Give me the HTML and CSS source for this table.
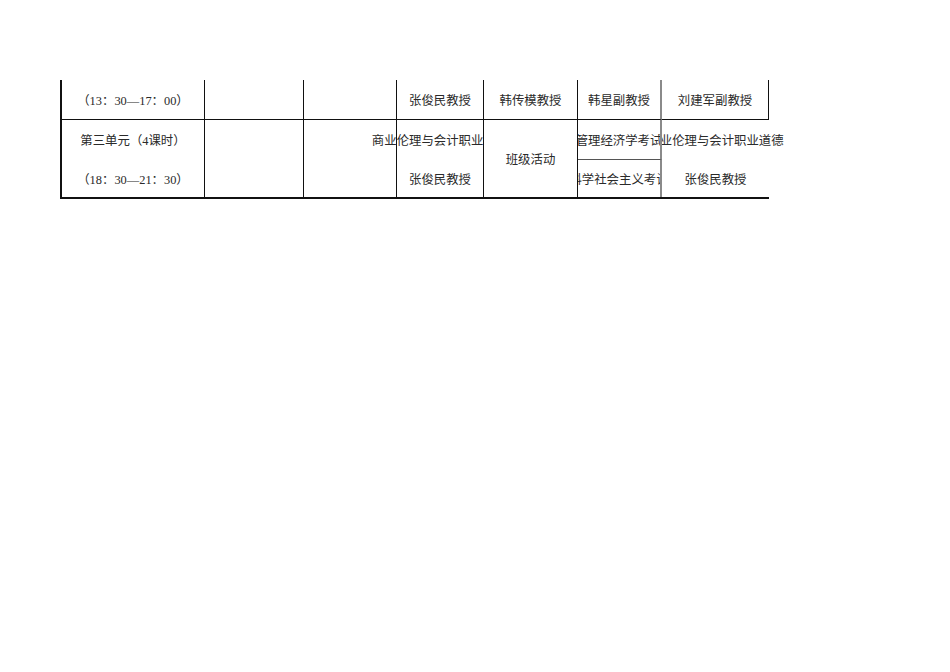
FILE: index.html
```html
<!DOCTYPE html>
<html lang="zh">
<head>
<meta charset="utf-8">
<link rel="stylesheet" href="styles.css">
</head>
<body>
<div class="sheet">
  <div class="grid">
    <div class="cell r1">（13：30—17：00）</div>
    <div class="cell r1"></div>
    <div class="cell r1"></div>
    <div class="cell r1">张俊民教授</div>
    <div class="cell r1">韩传模教授</div>
    <div class="cell r1 c6">韩星副教授</div>
    <div class="cell r1">刘建军副教授</div>

    <div class="cell">第三单元（4课时）</div>
    <div class="cell"></div>
    <div class="cell"></div>
    <div class="cell spill-left">商业伦理与会计职业道德</div>
    <div class="cell span2">班级活动</div>
    <div class="cell c6 clip sub">管理经济学考试</div>
    <div class="cell last spill-right">商业伦理与会计职业道德</div>

    <div class="cell">（18：30—21：30）</div>
    <div class="cell"></div>
    <div class="cell"></div>
    <div class="cell">张俊民教授</div>
    <div class="cell c6 clip">科学社会主义考试</div>
    <div class="cell last">张俊民教授</div>
  </div>
</div>
</body>
</html>
```
FILE: styles.css
```css
html, body {
  margin: 0;
  padding: 0;
  background: #fff;
}
body {
  width: 950px;
  height: 672px;
  font-family: "Liberation Serif", "Noto Sans CJK SC", serif;
  font-size: 12.4px;
  color: #2a2a2a;
}
.sheet {
  padding: 80px 0 0 60px;
}
.grid {
  display: grid;
  grid-template-columns: 143px 99px 93px 87px 94px 84px 107px;
  grid-template-rows: 40px 40px 37px;
  width: max-content;
  border-left: 2px solid #111;
  border-bottom: 2px solid #111;
}
.cell {
  box-sizing: border-box;
  display: flex;
  align-items: center;
  justify-content: center;
  white-space: nowrap;
  border-right: 1px solid #111;
  min-width: 0;
}
.r1 {
  border-bottom: 1px solid #111;
}
.c6 {
  border-right: 2px solid #8a8a8a;
}
.last {
  border-right: none;
}
.span2 {
  grid-column: 5;
  grid-row: 2 / 4;
}
.sub {
  border-bottom: 1px solid #555;
}
.clip {
  overflow: hidden;
}
.spill-left {
  clip-path: inset(0 0 0 -300px);
}
.spill-right {
  clip-path: inset(0 -300px 0 0);
}
```
